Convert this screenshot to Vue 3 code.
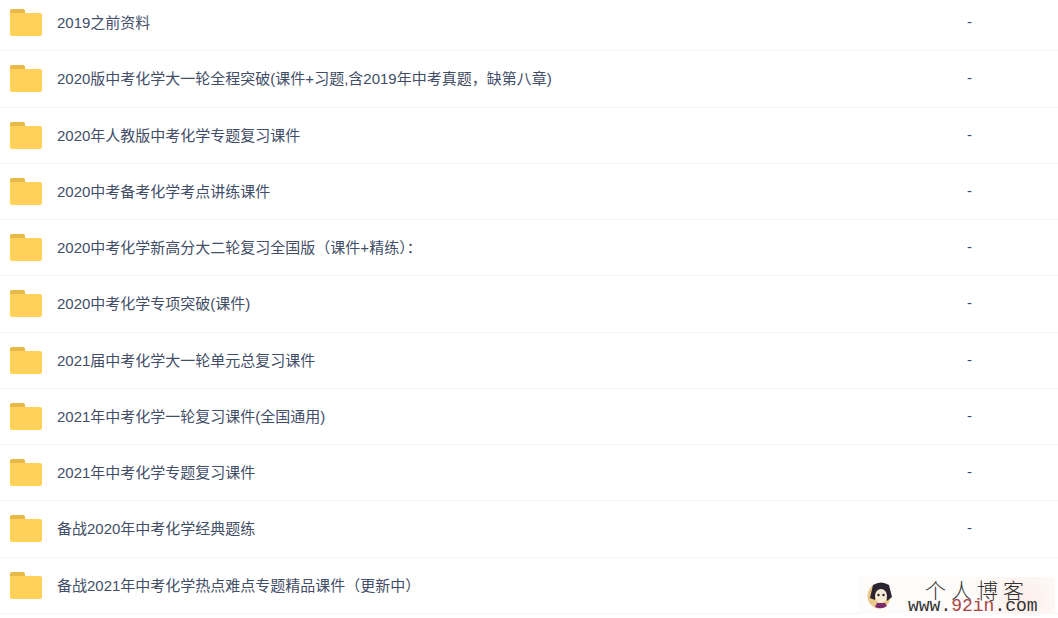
<script setup>
const rows = [
  { name: '2019之前资料', size: '-' },
  { name: '2020版中考化学大一轮全程突破(课件+习题,含2019年中考真题，缺第八章)', size: '-' },
  { name: '2020年人教版中考化学专题复习课件', size: '-' },
  { name: '2020中考备考化学考点讲练课件', size: '-' },
  { name: '2020中考化学新高分大二轮复习全国版（课件+精练）：', size: '-' },
  { name: '2020中考化学专项突破(课件)', size: '-' },
  { name: '2021届中考化学大一轮单元总复习课件', size: '-' },
  { name: '2021年中考化学一轮复习课件(全国通用)', size: '-' },
  { name: '2021年中考化学专题复习课件', size: '-' },
  { name: '备战2020年中考化学经典题练', size: '-' },
  { name: '备战2021年中考化学热点难点专题精品课件（更新中）', size: '' },
]
</script>

<template>
  <div class="page">
    <ul class="list">
      <li v-for="row in rows" :key="row.name" class="row">
        <svg class="folder" width="32" height="27" viewBox="0 0 32 27">
          <path d="M0 2a2 2 0 0 1 2-2h11a2 2 0 0 1 2 2v4H0z" fill="#e8b949" />
          <path d="M0 4h30a2 2 0 0 1 2 2v19a2 2 0 0 1-2 2H2a2 2 0 0 1-2-2z" fill="#ffd159" />
        </svg>
        <span class="name">{{ row.name }}</span>
        <span class="size">{{ row.size }}</span>
      </li>
    </ul>
    <div class="mark">
      <svg class="avatar" width="26" height="27" viewBox="0 0 26 27">
        <ellipse cx="12" cy="14" rx="11.5" ry="12.5" fill="#e8c98a" />
        <path d="M6 3q8-5 16 0l3 12-5 4-2-9H10l-2 8-5-2z" fill="#2c2430" />
        <ellipse cx="14" cy="14" rx="6" ry="7" fill="#f6ead6" />
        <circle cx="11.5" cy="13" r="1.2" fill="#222" />
        <circle cx="16.5" cy="13" r="1.2" fill="#222" />
        <path d="M8 25q7 3 12-1l-2-3H10z" fill="#7c2a6a" />
      </svg>
      <div class="mark-text">
        <div class="mark-cn">个人博客</div>
        <div class="mark-url">www.<span class="red">92in</span>.com</div>
      </div>
    </div>
  </div>
</template>

<style scoped>
.page {
  position: relative;
  width: 1058px;
  height: 618px;
  overflow: hidden;
  background: #fff;
  font-family: "Liberation Sans", "Noto Sans CJK SC", sans-serif;
}
.list {
  list-style: none;
  margin: -5px 0 0;
  padding: 0;
}
.row {
  display: flex;
  align-items: center;
  box-sizing: border-box;
  height: 56.25px;
  padding-left: 10px;
  border-bottom: 1px solid #f2f6fc;
}
.folder {
  flex: none;
  margin-right: 15px;
}
.name {
  flex: 1;
  font-size: 15px;
  color: #424e67;
  position: relative;
  top: -1px;
}
.size {
  width: 91px;
  font-size: 15px;
  color: #424e67;
  position: relative;
  top: -1px;
}
.mark {
  position: absolute;
  left: 858px;
  right: 3px;
  bottom: 4px;
  height: 37px;
  display: flex;
  align-items: center;
  gap: 15px;
  padding-left: 9px;
  box-sizing: border-box;
  background:
    radial-gradient(circle at 165px 24px, #fbeeea 0, #fdfaf8 40px, #fdfcfa 60px);
}
.avatar {
  flex: none;
}
.mark-text {
  color: #333;
}
.mark-cn {
  font-family: "Noto Sans CJK SC", serif;
  font-size: 21px;
  font-weight: 300;
  letter-spacing: 5px;
  margin-left: 17px;
  line-height: 20px;
  white-space: nowrap;
}
.mark-url {
  font-family: "Liberation Mono", monospace;
  font-size: 18px;
  line-height: 14px;
  white-space: nowrap;
}
.red {
  color: #a44;
}
</style>
